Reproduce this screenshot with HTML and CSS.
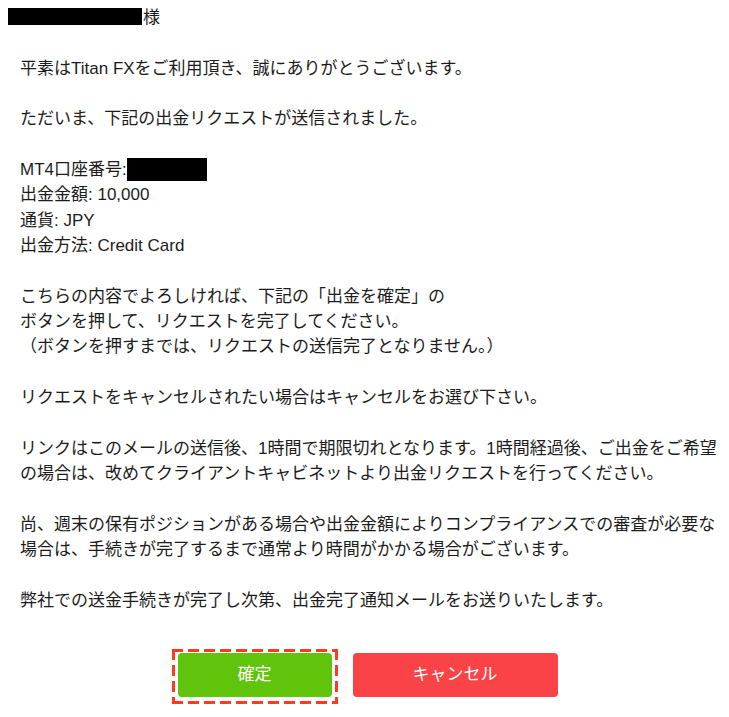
FILE: index.html
```html
<!DOCTYPE html>
<html lang="ja">
<head>
<meta charset="utf-8">
<title>出金リクエスト</title>
<link rel="stylesheet" href="styles.css">
</head>
<body>
<div class="mail">
  <p class="greeting"><span class="redact redact-name"></span>様</p>
  <p>平素はTitan FXをご利用頂き、誠にありがとうございます。</p>
  <p>ただいま、下記の出金リクエストが送信されました。</p>
  <p>MT4口座番号:<span class="redact redact-acct"></span><br>出金金額: 10,000<br>通貨: JPY<br>出金方法: Credit Card</p>
  <p>こちらの内容でよろしければ、下記の「出金を確定」の<br>ボタンを押して、リクエストを完了してください。<br>（ボタンを押すまでは、リクエストの送信完了となりません。）</p>
  <p>リクエストをキャンセルされたい場合はキャンセルをお選び下さい。</p>
  <p>リンクはこのメールの送信後、1時間で期限切れとなります。1時間経過後、ご出金をご希望<br>の場合は、改めてクライアントキャビネットより出金リクエストを行ってください。</p>
  <p>尚、週末の保有ポジションがある場合や出金金額によりコンプライアンスでの審査が必要な<br>場合は、手続きが完了するまで通常より時間がかかる場合がございます。</p>
  <p class="last">弊社での送金手続きが完了し次第、出金完了通知メールをお送りいたします。</p>
  <div class="actions">
    <div class="highlight"><a class="btn btn-confirm">確定</a></div>
    <a class="btn btn-cancel">キャンセル</a>
  </div>
</div>
</body>
</html>
```

FILE: styles.css
```css
html, body {
  margin: 0;
  padding: 0;
  background: #ffffff;
}
.mail {
  padding: 5px 0 0 20px;
  font-family: "Liberation Sans", "Noto Sans CJK JP", sans-serif;
  font-size: 17px;
  line-height: 25.33px;
  color: #1c1c1c;
}
.mail p {
  margin: 0 0 25.33px 0;
  white-space: nowrap;
}
.mail p.last {
  margin-bottom: 0;
}
.greeting {
  margin-left: -12px !important;
}
.redact {
  display: inline-block;
  background: #000000;
}
.redact-name {
  width: 134px;
  height: 17px;
  vertical-align: -2px;
  margin-right: 1px;
}
.redact-acct {
  width: 80px;
  height: 23px;
  vertical-align: -6px;
}
.actions {
  display: flex;
  justify-content: center;
  align-items: flex-start;
  gap: 15px;
  margin: 36px 0 0 -20px;
}
.highlight {
  padding: 4px 6px 7px 6px;
  background:
    repeating-linear-gradient(90deg, #ff3b1f 0 11px, transparent 11px 16px) left top / 100% 3px no-repeat,
    repeating-linear-gradient(90deg, #ff3b1f 0 11px, transparent 11px 16px) left bottom / 100% 3px no-repeat,
    repeating-linear-gradient(180deg, #ff3b1f 0 11px, transparent 11px 16px) left top / 3px 100% no-repeat,
    repeating-linear-gradient(180deg, #ff3b1f 0 11px, transparent 11px 16px) right top / 3px 100% no-repeat;
}
.btn {
  display: flex;
  align-items: center;
  justify-content: center;
  height: 44px;
  border-radius: 4px;
  color: #ffffff;
  font-size: 17px;
  text-decoration: none;
}
.btn-confirm {
  width: 154px;
  background: #60c40c;
}
.btn-cancel {
  width: 205px;
  margin-top: 4px;
  background: #fa4346;
}
```
